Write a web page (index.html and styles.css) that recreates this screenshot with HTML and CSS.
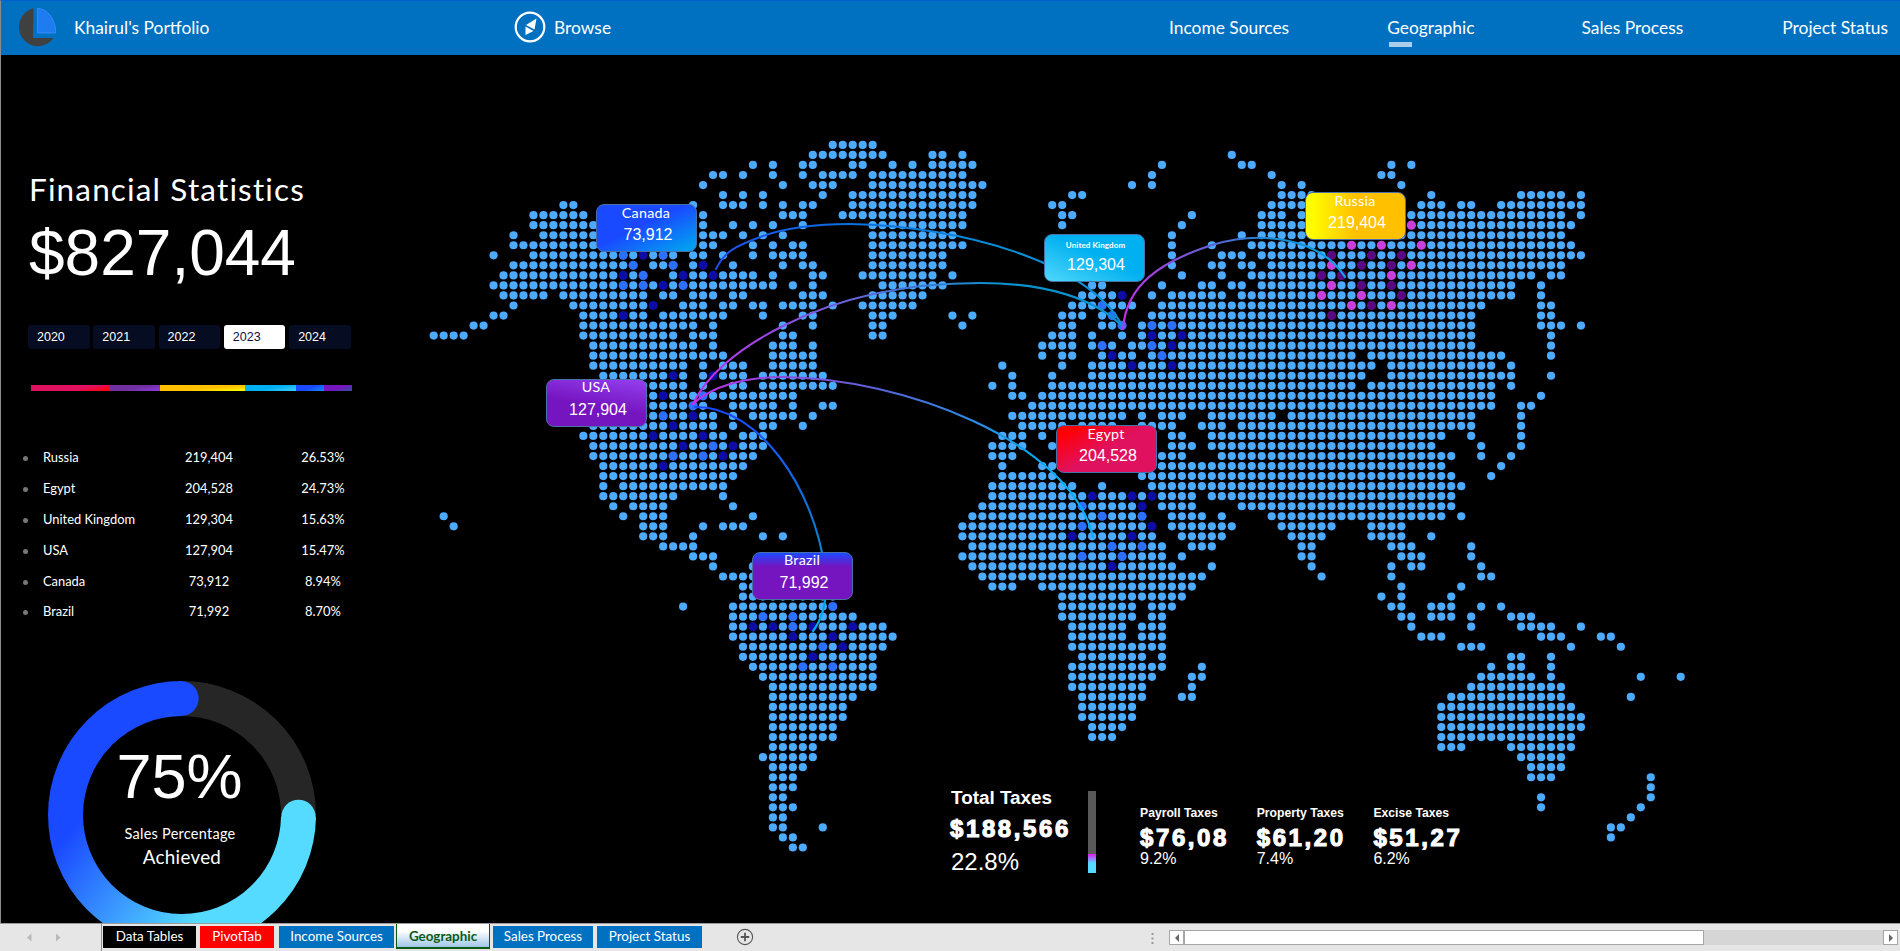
FILE: index.html
```html
<!DOCTYPE html>
<html lang="en">
<head>
<meta charset="utf-8">
<title>Khairul's Portfolio - Geographic</title>
<link rel="stylesheet" href="styles.css">
</head>
<body>
<header class="topbar">
  <svg class="logo" width="40" height="40" viewBox="17 6 40 40">
    <path d="M33.5 7.3 A19 19.2 0 1 0 53.5 37 L33 37 Z" fill="#404040"/>
    <path d="M37.5 7.5 A18.3 24 0 0 1 55.7 32 L37.5 32 Z" fill="#1f7cf0" stroke="#3a92ff" stroke-width=".8"/>
  </svg>
  <span class="brand">Khairul's Portfolio</span>
  <svg class="compass" width="32" height="32" viewBox="0 0 32 32">
    <circle cx="16" cy="16" r="14.3" fill="none" stroke="#fff" stroke-width="2.2"/>
    <path d="M22.5 7.5 L12 14 L20.5 18.5 Z M11.5 15.5 L19.5 20 L11.5 24 Z" fill="#fff"/>
  </svg>
  <span class="browse">Browse</span>
  <nav class="nav">
    <a class="nav-income">Income Sources</a>
    <a class="nav-geo">Geographic</a>
    <a class="nav-sales">Sales Process</a>
    <a class="nav-status">Project Status</a>
  </nav>
</header>

<main class="sheet">
  <aside class="side">
    <h1 class="title">Financial Statistics</h1>
    <div class="total">$827,044</div>
    <div class="years">
      <span class="year">2020</span><span class="year">2021</span><span class="year">2022</span><span class="year year-on">2023</span><span class="year">2024</span>
    </div>
    <div class="share">
      <i class="s-egypt"></i><i class="s-usa"></i><i class="s-russia"></i><i class="s-uk"></i><i class="s-canada"></i><i class="s-brazil"></i>
    </div>
    <ul class="list">
      <li><b></b><span>Russia</span><em>219,404</em><em>26.53%</em></li>
      <li><b></b><span>Egypt</span><em>204,528</em><em>24.73%</em></li>
      <li><b></b><span>United Kingdom</span><em>129,304</em><em>15.63%</em></li>
      <li><b></b><span>USA</span><em>127,904</em><em>15.47%</em></li>
      <li><b></b><span>Canada</span><em>73,912</em><em>8.94%</em></li>
      <li><b></b><span>Brazil</span><em>71,992</em><em>8.70%</em></li>
    </ul>
    <div class="donut">
      <svg width="268" height="268" viewBox="-134 -134 268 268">
        <defs>
          <linearGradient id="ring" gradientUnits="userSpaceOnUse" x1="-110" y1="15" x2="10" y2="110">
            <stop offset="0" stop-color="#1a4aff"/><stop offset="1" stop-color="#55dbff"/>
          </linearGradient>
        </defs>
        <path d="M0 -116.5 A116.5 116.5 0 0 1 116.5 0" fill="none" stroke="#262626" stroke-width="35"/>
        <path d="M116.5 2 A116.5 116.5 0 1 1 0 -116.5" fill="none" stroke="url(#ring)" stroke-width="35"/>
        <circle cx="-.5" cy="-116.5" r="17.2" fill="#1a4aff"/>
        <circle cx="116.5" cy="2" r="17.2" fill="#55dbff"/>
      </svg>
      <div class="donut-text">
        <div class="pct">75%</div>
        <div class="cap1">Sales Percentage</div>
        <div class="cap2">Achieved</div>
      </div>
    </div>
  </aside>

  <section class="map">
    <svg class="world" width="1475" height="868" viewBox="425 55 1475 868">
      <defs>
        <linearGradient id="g1" gradientUnits="userSpaceOnUse" x1="716" y1="0" x2="1000" y2="0"><stop offset="0" stop-color="#1f4ee8"/><stop offset=".45" stop-color="#0b6fe0"/><stop offset="1" stop-color="#0a8fd6"/></linearGradient>
        <linearGradient id="g2" gradientUnits="userSpaceOnUse" x1="693" y1="0" x2="1000" y2="0"><stop offset="0" stop-color="#c22fe8"/><stop offset=".4" stop-color="#7b58dc"/><stop offset="1" stop-color="#0a93cf"/></linearGradient>
        <linearGradient id="g3" gradientUnits="userSpaceOnUse" x1="693" y1="0" x2="1060" y2="0"><stop offset="0" stop-color="#c22fe8"/><stop offset=".5" stop-color="#5a63d6"/><stop offset="1" stop-color="#00b0f0"/></linearGradient>
        <linearGradient id="g4" gradientUnits="userSpaceOnUse" x1="0" y1="407" x2="0" y2="631"><stop offset="0" stop-color="#1a4aff"/><stop offset=".6" stop-color="#0a80cf"/><stop offset="1" stop-color="#00b0f0"/></linearGradient>
        <linearGradient id="g5" gradientUnits="userSpaceOnUse" x1="1123" y1="0" x2="1345" y2="0"><stop offset="0" stop-color="#c030e8"/><stop offset=".35" stop-color="#6a5ed8"/><stop offset=".65" stop-color="#1c86d0"/><stop offset="1" stop-color="#00a8ec"/></linearGradient>
      </defs>
      <g id="dots" fill="#4caaff"></g>
      <g fill="none" stroke-width="2.1" stroke-linecap="round">
        <path stroke="url(#g1)" d="M716 269 C724 252 735 246 763 236 S820 224 850 224 C960 226 1090 262 1123 327"/>
        <path stroke="url(#g2)" d="M693 404 C705 378 735 350 783 326 C850 292 920 283 980 283 C1045 283 1095 298 1123 327"/>
        <path stroke="url(#g3)" d="M693 404 C712 386 745 377 783 377 C900 378 1070 440 1093 537"/>
        <path stroke="url(#g4)" d="M695 407 C758 406 814 487 825 570 C828 595 825 615 813 631"/>
        <path stroke="url(#g5)" d="M1123 329 C1126 285 1160 262 1212 245 C1262 230 1320 238 1345 277"/>
      </g>
    </svg>
    <div class="card c-canada"><span>Canada</span><strong>73,912</strong></div>
    <div class="card c-uk"><span>United Kingdom</span><strong>129,304</strong></div>
    <div class="card c-russia"><span>Russia</span><strong>219,404</strong></div>
    <div class="card c-usa"><span>USA</span><strong>127,904</strong></div>
    <div class="card c-egypt"><span>Egypt</span><strong>204,528</strong></div>
    <div class="card c-brazil"><span>Brazil</span><strong>71,992</strong></div>

    <div class="taxes">
      <div class="tax-total">
        <div class="tt-name">Total Taxes</div>
        <div class="heavy">$188,566</div>
        <div class="tt-pct">22.8%</div>
      </div>
      <div class="tax-bar"></div>
      <div class="tax"><div class="t-name">Payroll Taxes</div><div class="heavy">$76,08</div><div class="t-pct">9.2%</div></div>
      <div class="tax"><div class="t-name">Property Taxes</div><div class="heavy">$61,20</div><div class="t-pct">7.4%</div></div>
      <div class="tax"><div class="t-name">Excise Taxes</div><div class="heavy">$51,27</div><div class="t-pct">6.2%</div></div>
    </div>
  </section>
</main>

<footer class="tabs">
  <svg class="arrows" width="101" height="27" viewBox="0 0 101 27">
    <path d="M31.5 9.5 L27 13.5 L31.5 17.5 Z M56 9.5 L60.5 13.5 L56 17.5 Z" fill="#b9b9b9"/>
  </svg>
  <span class="tab t-data">Data Tables</span>
  <span class="tab t-pivot">PivotTab</span>
  <span class="tab t-income">Income Sources</span>
  <span class="tab t-geo">Geographic</span>
  <span class="tab t-sales">Sales Process</span>
  <span class="tab t-status">Project Status</span>
  <svg class="plus" width="18" height="18" viewBox="0 0 18 18">
    <circle cx="9" cy="9" r="7.6" fill="none" stroke="#555" stroke-width="1.1"/>
    <path d="M9 4.8 V13.2 M4.8 9 H13.2" stroke="#555" stroke-width="1.8"/>
  </svg>
  <svg class="grip" width="3" height="12" viewBox="0 0 3 12"><path d="M.5 0h2v2h-2zM.5 4.5h2v2h-2zM.5 9h2v2h-2z" fill="#999"/></svg>
  <div class="scroll">
    <span class="sbtn"><svg width="6" height="8" viewBox="0 0 6 8"><path d="M5 0 L1 4 L5 8 Z" fill="#666"/></svg></span>
    <span class="thumb"></span>
    <span class="sbtn sright"><svg width="6" height="8" viewBox="0 0 6 8"><path d="M1 0 L5 4 L1 8 Z" fill="#666"/></svg></span>
  </div>
</footer>
<script src="map.js"></script>
</body>
</html>
```

FILE: styles.css
```css
* { box-sizing: border-box; }
body {
  margin: 0;
  width: 1900px;
  height: 951px;
  display: flex;
  flex-direction: column;
  overflow: hidden;
  background: #000;
  color: #fff;
  font-family: Lato, sans-serif;
}

/* top navigation */
.topbar {
  height: 55px;
  flex: none;
  display: flex;
  align-items: center;
  background: #0070c0;
  border-top: 1px solid #0060d0;
  border-left: 1px solid #8c8c8c;
  font-size: 17.4px;
  line-height: 51px;
  white-space: nowrap;
}
.logo { margin: 0 0 2px 16px; }
.brand { width: 457px; padding: 0 0 2px 17px; }
.compass { margin-bottom: 2px; }
.browse { padding: 0 0 2px 8px; }
.nav { flex: 1; display: flex; justify-content: flex-end; padding: 0 12px 2px 0; }
.nav a { position: relative; }
.nav-income { margin-right: 98px; }
.nav-geo { margin-right: 107px; }
.nav-sales { margin-right: 99px; }
.nav-geo::after {
  content: "";
  position: absolute;
  left: 2px;
  top: 40px;
  width: 23px;
  height: 5px;
  background: #a9cdea;
}

.sheet {
  flex: none;
  height: 868px;
  display: flex;
  overflow: hidden;
  border-left: 1px solid #8c8c8c;
}

/* left column */
.side { width: 424px; flex: none; padding: 116px 0 0 27px; }
.title { margin: 0; padding-left: 1px; font-size: 31.5px; line-height: 37px; font-weight: 400; letter-spacing: 1.15px; white-space: nowrap; }
.total { margin: 9px 0 0 1px; font: 64px/72px "Liberation Sans", sans-serif; }
.years { display: flex; gap: 3.7px; margin-top: 36px; }
.year {
  width: 61.6px;
  height: 24px;
  padding-left: 9px;
  border-radius: 3px;
  background: #060c22;
  font: 12.5px/24px "Liberation Sans", sans-serif;
}
.year-on { background: #fff; color: #10104a; }
.share { display: flex; width: 321px; height: 6px; margin: 36px 0 0 3px; }
.share i { height: 6px; }
.s-egypt { width: 79px; background: linear-gradient(170deg, #e0115f 60%, #ff0000); }
.s-usa { width: 50px; background: linear-gradient(170deg, #7030a0 50%, #8c3be0); }
.s-russia { width: 85px; background: linear-gradient(176deg, #ffc000 55%, #ffff00); }
.s-uk { width: 51px; background: linear-gradient(170deg, #00b0f0 50%, #40cdf8); }
.s-canada { width: 28px; background: linear-gradient(160deg, #1a4aff 50%, #0a90f0); }
.s-brazil { width: 28px; background: linear-gradient(160deg, #7515c0 50%, #30509a); }
.list { list-style: none; margin: 51px 0 0; padding: 0; font-size: 12.9px; }
.list li { display: flex; align-items: center; height: 30.9px; line-height: 31px; }
.list b { width: 5px; height: 5px; margin: 2px 0 0 -5px; border-radius: 50%; background: #777; }
.list span { width: 109px; margin-left: 15px; white-space: nowrap; }
.list em { font-style: normal; width: 114px; text-align: center; }
.donut { display: grid; width: 268px; height: 268px; margin: 54px 0 0 20px; }
.donut > * { grid-area: 1 / 1; }
.donut-text { text-align: center; padding-top: 61px; }
.pct { font: 63px/68px "Liberation Sans", sans-serif; margin-left: -5px; }
.cap1 { font-size: 14.5px; line-height: 20px; margin: 14px 4px 0 0; letter-spacing: .25px; }
.cap2 { font-size: 18.8px; line-height: 24px; margin-top: 1px; letter-spacing: .3px; }

/* map canvas */
.map { position: relative; width: 1475px; flex: none; display: grid; }
.map > svg, .taxes { grid-area: 1 / 1; }
.card {
  position: absolute;
  width: 101px;
  height: 48px;
  border: 1px solid #4a70a8;
  border-radius: 8px;
  text-align: center;
  display: flex;
  flex-direction: column;
}
.card span { font-size: 14.3px; line-height: 16px; margin-right: 1px; letter-spacing: .25px; }
.card strong { font: 16px/20px "Liberation Sans", sans-serif; margin: 4px 0 0 3px; }
.c-canada { left: 171px; top: 149px; background: linear-gradient(155deg, #1a4aff 45%, #00a2f0 95%); }
.c-uk { left: 619px; top: 179px; background: linear-gradient(205deg, #00b0f0 45%, #50d8fb 100%); }
.c-uk span { font-size: 8px; font-weight: 700; letter-spacing: .1px; margin-left: 3px; line-height: 20px; }
.c-uk strong { margin-top: 0; }
.c-russia { left: 880px; top: 137px; background: linear-gradient(90deg, #ffff00 5%, #ffc000 50%); }
.c-usa { left: 121px; top: 324px; background: linear-gradient(10deg, #7515c0 45%, #9440f0); }
.c-egypt { left: 631px; top: 370px; background: linear-gradient(150deg, #ff0000 10%, #e0115f 50%); }
.c-brazil { left: 327px; top: 497px; background: linear-gradient(180deg, #1a4aff 0, #7515c0 30%); }
.c-usa span, .c-brazil span { line-height: 14px; }
.c-usa strong, .c-brazil strong { margin-top: 6px; }

/* tax summary */
.taxes { align-self: start; display: flex; margin: 732px 0 0 525px; font-family: "Liberation Sans", sans-serif; white-space: nowrap; }
.tax-total { width: 138px; }
.tt-name { font-size: 18.9px; line-height: 22px; font-weight: 700; margin-left: 1px; }
.heavy { font-size: 24px; line-height: 26px; font-weight: 700; letter-spacing: 2.6px; -webkit-text-stroke: 1.1px #fff; }
.tax-total .heavy { margin-top: 7px; }
.tt-pct { font-size: 24px; line-height: 28px; margin: 6px 0 0 1px; }
.tax-bar { width: 8px; height: 82px; margin: 4px 44px 0 0; background: linear-gradient(180deg, #595959 77%, #e31ef2 77%, #55d9ff 88%); }
.tax { width: 116.7px; padding-top: 18px; }
.t-name { font-size: 12.2px; line-height: 16px; font-weight: 700; }
.tax .heavy { margin-top: 4px; }
.t-pct { font-size: 16px; line-height: 18px; margin-top: -1px; }

/* sheet tabs */
.tabs {
  flex: none;
  height: 28px;
  display: flex;
  align-items: flex-start;
  background: #e6e6e6;
  border-top: 1px solid #9b9b9b;
  font-size: 13.4px;
  line-height: 21px;
  white-space: nowrap;
}
.arrows { border-right: 1px solid #8a8a8a; flex: none; width: 102px; }
.tab { height: 22px; margin: 2px 4px 0 0; text-align: center; background: #0070c0; }
.t-data { width: 93px; margin-left: 1px; background: #000; }
.t-pivot { width: 74px; margin-right: 5px; background: #ff0000; }
.t-income { width: 115px; margin-right: 2px; }
.t-geo { width: 94px; height: 25px; margin: 0 3px 0 0; padding-top: 2px; background: linear-gradient(#fff 30%, #9fc6e8); border: solid #0a5a14; border-width: 0 1px 2px; color: #0a5a14; font-weight: 700; }
.t-sales { width: 100px; }
.t-status { width: 105px; margin-right: 0; }
.plus { margin: 4px 0 0 34px; flex: none; }
.grip { margin: 9px 0 0 397px; flex: none; }
.scroll { display: flex; width: 729px; height: 15px; margin: 6px 0 0 15px; background: #d6d6d6; }
.sbtn { display: flex; align-items: center; justify-content: center; width: 15px; border: 1px solid #a6a6a6; background: #fff; }
.sright { margin-left: auto; }
.thumb { width: 520px; border: 1px solid #a6a6a6; background: #fff; }
```

FILE: map.js
```js
// Runs of dots per map row: "first-last" column indexes.
const rows = [
  "40-44",
  "38-45 50-51 53 80",
  "32 34 37-38 42-43 46 48 50-54 73 81-82 96 98",
  "28-29 31 34 37 39-42 44-53 72 84 95-96",
  "27 35 38-40 44-55 70 72 85 87 97",
  "29 31 33 39 42-54 64-65 85-88 100 109-113 115",
  "13-14 26 29-31 33 35 37-38 42-54 62-63 84-87 99-101 103-104 107-115",
  "10-15 27 35-37 41-53 63-64 76 83-85 87 98-113 115",
  "10-16 27 30 32 34 37 44-53 63 75 83-87 98-114",
  "8 11-16 27-29 31 33 35 44-52 74 81 83-87 97-113",
  "8-16 27-28 32 34 36-37 44-53 74 78 82-114",
  "6 10-24 26-27 29 32 34-37 44-51 74 79-81 83-115",
  "8-20 22-24 26-27 30 35 37-38 44-51 74 78-79 81-82 84-113",
  "7-21 24-32 34 38-39 43-50 52 75 79 82-110 112-113",
  "6-34 36 38 45-51 66-67 73 77-78 80-81 83-108 111",
  "7-11 13-21 23-24 26-28 30-31 37-39 44-49 65-69 72 74-79 81-108 111",
  "8 14-22 25-27 29-30 32-33 35-38 40 43-48 64-70 73-105 111-112",
  "6-7 15-21 23-29 33 37-38 44-46 52 54 63-65 67-68 72-104 111-112",
  "4-5 15-26 28 35 38 44-45 53 63-64 67-69 71-104 111-113 115",
  "0-3 15-24 26-28 35-36 44-45 62-64 66 69 71-104 112",
  "16-26 28 34-36 38 61-64 66-68 70-104 112",
  "16-29 34-38 61 63-64 67-70 72-92 94-107 112",
  "16-25 27 29-31 34-38 57 63 66-94 96-106 108",
  "17-25 27-31 33-39 58 62 66-93 96-108 112",
  "17-25 27 30-31 33-40 56 58 62-92 94-106 108",
  "17-36 58-59 61-106 111",
  "17-27 30-34 36 39-40 60-106 109-110",
  "17-28 30 32-36 38 58-69 71 73-75 78-84 86-104 109",
  "16-28 30 33-34 37 59-63 65-68 71-74 77-79 81-104 109",
  "15-29 31-33 57-59 61 74-75 78-101 104 109",
  "16-33 56-59 62 74-76 78-100 105 109",
  "16-32 56-58 73-75 79-102 105 108",
  "17-31 57 61-62 73-101 107",
  "17-30 57-62 71-102 106",
  "17 19-29 56-64 67 72-103",
  "17-24 29 56-76 78-102",
  "18 20-23 30 55-71 73-76 81-102",
  "1 19 21-23 32 54-71 74-77 79 84-101 103",
  "2 21-23 27 29-31 53-72 74-80 85-90 94-97",
  "21-23 26 33 35 53-72 75-79 86-89 94-97 100",
  "23-26 54-73 76-78 87-88 96-98 104",
  "26-28 53-73 75 87-88 97-99 104",
  "28 32 54-74 78 88 96 98-99 105",
  "29-32 55-77 89 96 105-106",
  "31-32 56-58 61-76 97 103",
  "31-40 63-75 95 97 102",
  "25 30-40 63-70 72-74 96-97 100-102 105 107",
  "30-42 63-70 72-73 97-98 100-102 104 108-110",
  "30-45 64-69 71-73 98 104 109-112 115",
  "30-46 64-69 71-73 99-101 111-113 117-118",
  "31-45 64-73 103-105 114 119",
  "31-44 65-71 73 108-109 112",
  "32-44 64-73 77 106 108-109 112",
  "33-44 64-72 76-77 105-110 112 121 125",
  "34-44 64-71 76 104-113",
  "34-42 65-71 75-76 102-113 120",
  "34-41 65-70 101-114",
  "34-41 65-70 101-115",
  "34-40 66-69 101-115",
  "34-40 66-68 101-114",
  "34-38 101-103 108-114",
  "33-38 109-113",
  "34-37 110-113",
  "34-36 110-112 122",
  "34-36 122",
  "34-35 111 122",
  "34-36 111 121",
  "34-35 120",
  "34-35 39 118-119",
  "35-36 118",
  "36-37"
];

// Highlighted dots as "column,row" pairs per colour.
const marks = {
  "#0d0da5": "21,11 27,12 19,13 25,13 28,13 23,14 22,16 19,17 69,15 72,19 75,19 74,20 68,21 70,22 74,22 24,23 28,23 23,25 26,27 24,28 22,29 27,29 25,30 30,30 29,31 23,32 66,35 70,35 72,35 71,36 72,38 64,39 70,39 68,42 32,48 34,48 38,48 42,48 36,49 40,49 41,50 38,51",
  "#2b70ff": "19,11 23,11 20,12 24,12 21,13 19,14 21,14 25,14 67,16 68,17 69,18 72,18 74,18 67,20 72,20 73,21 27,25 26,26 23,27 28,30 24,31 27,31 65,36 67,37 71,37 65,38 68,40 71,40 65,41 69,41 40,46 33,47 36,47 36,48 39,50 37,52 40,52",
  "#5a0a80": "90,11 94,11 97,11 93,12 96,12 89,13 91,13 93,14 96,14 97,15 94,16 90,17",
  "#c840dc": "98,8 92,10 95,10 99,10 90,12 98,12 96,13 90,14 89,15 93,15 92,16 96,16"
};

const coloured = {};
for (const [fill, list] of Object.entries(marks)) {
  for (const key of list.split(" ")) coloured[key] = fill;
}

const layer = document.getElementById("dots");
function addDot(col, row) {
  const dot = document.createElementNS("http://www.w3.org/2000/svg", "circle");
  const fill = coloured[col + "," + row];
  dot.setAttribute("cx", (433.7 + 9.976 * col).toFixed(2));
  dot.setAttribute("cy", (144.9 + 10.037 * row).toFixed(2));
  dot.setAttribute("r", fill ? 4.6 : 4.1);
  if (fill) dot.setAttribute("fill", fill);
  layer.appendChild(dot);
}
rows.forEach((line, row) => {
  for (const run of line.split(" ")) {
    const [first, last = first] = run.split("-").map(Number);
    for (let col = first; col <= last; col++) addDot(col, row);
  }
});
```
